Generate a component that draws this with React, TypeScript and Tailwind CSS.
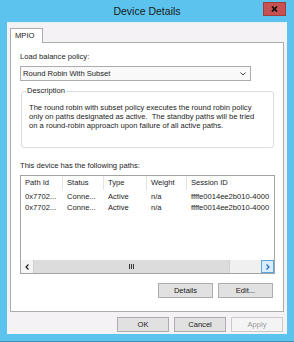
import React from "react";

const cols = [
  { w: "w-[42px]", label: "Path Id" },
  { w: "w-[41px]", label: "Status" },
  { w: "w-[43px]", label: "Type" },
  { w: "w-[40px]", label: "Weight" },
  { w: "w-[90px]", label: "Session ID" },
];

const rows = [
  ["0x7702...", "Conne...", "Active", "n/a", "ffffe0014ee2b010-4000"],
  ["0x7702...", "Conne...", "Active", "n/a", "ffffe0014ee2b010-4000"],
];

function Btn({ children, className = "" }: { children: React.ReactNode; className?: string }) {
  return (
    <div
      className={
        "h-[15px] flex items-center justify-center border bg-[#e1e1e1] border-[#adadad] " + className
      }
    >
      {children}
    </div>
  );
}

export default function App() {
  return (
    <div className="w-[294px] h-[342px] bg-[#5cc3ee] flex flex-col font-['Liberation_Sans',Arial,sans-serif] text-[7.6px] leading-[10px] text-[#1b1b1b] border-b border-[#3b8fb8]">
      <div className="relative h-[22px] flex items-center justify-center shrink-0">
        <span className="text-[10.5px] text-[#1a1a1a]">Device Details</span>
        <div className="absolute right-[8px] top-[2px] w-[23px] h-[14px] bg-[#c75050] border border-[#a33c3c] flex items-center justify-center">
          <svg width="7" height="6" viewBox="0 0 7 6">
            <path d="M1 0.5 L6 5.5 M6 0.5 L1 5.5" stroke="#111" strokeWidth="1.7" />
          </svg>
        </div>
      </div>
      <div className="ml-[7px] mr-[7px] mb-[7px] flex-1 bg-[#f5f2f5] border-t border-[#e6f4fb] px-[3px] pt-[5px] flex flex-col">
        <div className="relative z-10 -mb-px w-[33px] h-[15px] bg-white border border-b-0 border-[#acacac] pl-[4px] pt-[2px]">
          MPIO
        </div>
        <div className="h-[270px] border border-[#acacac] bg-white flex flex-col pl-[9px] pr-[9px]">
          <div className="mt-[9px] h-[10px]">Load balance policy:</div>
          <div className="mt-[4px] w-[231px] h-[15px] border border-[#acacac] bg-[#f9f9f9] flex items-center justify-between pl-[2px] pr-[4px]">
            <span>Round Robin With Subset</span>
            <svg width="6" height="4" viewBox="0 0 6 4">
              <path d="M0.5 0.5 L3 3 L5.5 0.5" stroke="#444" strokeWidth="1" fill="none" />
            </svg>
          </div>
          <div className="relative mt-[10px] ml-[1px] w-[253px] h-[57px] border border-[#dcdcdc] rounded-[3px]">
            <div className="absolute -top-[6px] left-[4px] bg-white px-[1px] leading-[10px]">Description</div>
            <div className="mt-[11px] pl-[7px] leading-[9px]">
              <div>The round robin with subset policy executes the round robin policy</div>
              <div>only on paths designated as active.&nbsp; The standby paths will be tried</div>
              <div>on a round-robin approach upon failure of all active paths.</div>
            </div>
          </div>
          <div className="mt-[13px] h-[10px]">This device has the following paths:</div>
          <div className="mt-[4px] w-[255px] h-[99px] border border-[#a3a3a3] bg-white flex flex-col overflow-hidden">
            <div className="h-[14px] flex shrink-0">
              {cols.map((c, i) => (
                <div
                  key={i}
                  className={c.w + " shrink-0 h-full flex items-center pl-[4px] whitespace-nowrap " + (i < 4 ? "border-r border-[#e3e3e3]" : "")}
                >
                  {c.label}
                </div>
              ))}
            </div>
            <div className="flex-1 flex flex-col pt-[1px]">
              {rows.map((r, ri) => (
                <div key={ri} className="h-[11.5px] flex items-center">
                  {r.map((v, i) => (
                    <div key={i} className={cols[i].w + " shrink-0 pl-[4px] whitespace-nowrap overflow-visible"}>
                      {v}
                    </div>
                  ))}
                </div>
              ))}
            </div>
            <div className="h-[13px] flex shrink-0 bg-[#f0f0f0]">
              <div className="w-[12px] h-full flex items-center justify-center bg-[#f5f5f5]">
                <svg width="4" height="6" viewBox="0 0 4 6">
                  <path d="M3.5 0.5 L1 3 L3.5 5.5" stroke="#222" strokeWidth="1.2" fill="none" />
                </svg>
              </div>
              <div className="w-[197px] h-full flex items-center justify-center bg-[#dcdcdc] border-x border-[#d0d0d0]">
                <div className="flex gap-[1px]">
                  <div className="w-[1px] h-[5px] bg-[#333]" />
                  <div className="w-[1px] h-[5px] bg-[#333]" />
                  <div className="w-[1px] h-[5px] bg-[#333]" />
                </div>
              </div>
              <div className="flex-1 h-full bg-[#f0f0f0]" />
              <div className="w-[13px] h-full flex items-center justify-center bg-[#d8ecfb] border border-[#5aa4e0]">
                <svg width="4" height="6" viewBox="0 0 4 6">
                  <path d="M0.5 0.5 L3 3 L0.5 5.5" stroke="#1a6bb8" strokeWidth="1.2" fill="none" />
                </svg>
              </div>
            </div>
          </div>
          <div className="mt-[9px] flex justify-end gap-[5px] pr-[1px]">
            <Btn className="w-[55px]">Details</Btn>
            <Btn className="w-[55px]">Edit...</Btn>
          </div>
        </div>
        <div className="mt-[5px] flex justify-end gap-[5px] pr-[1px]">
          <Btn className="w-[52px] border-[#3d86c6]">OK</Btn>
          <Btn className="w-[52px]">Cancel</Btn>
          <Btn className="w-[52px] bg-[#f4f4f4] border-[#c9c9c9] text-[#9a9a9a]">Apply</Btn>
        </div>
      </div>
    </div>
  );
}
